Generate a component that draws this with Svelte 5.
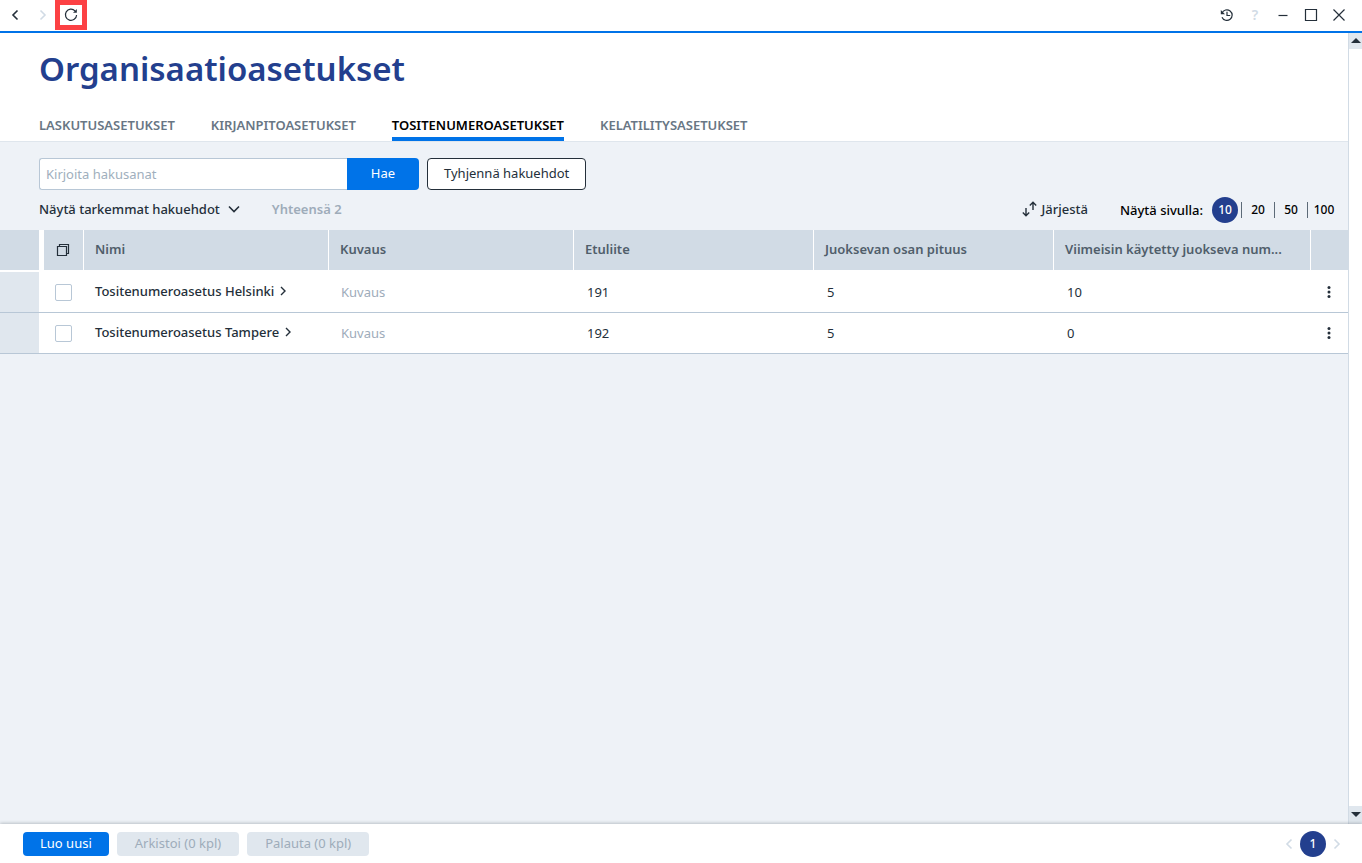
<script>
  let search = $state('');
  let activeTab = $state('TOSITENUMEROASETUKSET');
  let pageSize = $state(10);
  let selected = $state([]);

  const tabs = [
    'LASKUTUSASETUKSET',
    'KIRJANPITOASETUKSET',
    'TOSITENUMEROASETUKSET',
    'KELATILITYSASETUKSET'
  ];
  const pageSizes = [10, 20, 50, 100];
  const rows = [
    { name: 'Tositenumeroasetus Helsinki', prefix: '191', length: '5', last: '10' },
    { name: 'Tositenumeroasetus Tampere', prefix: '192', length: '5', last: '0' }
  ];
</script>

<div class="window">
  <header class="topbar">
    <button class="icon-button back" aria-label="Takaisin">
      <svg width="8" height="12" viewBox="0 0 8 12"><path d="M6.5 1.5 2 6l4.500 4.500" /></svg>
    </button>
    <button class="icon-button forward" aria-label="Eteenpäin" disabled>
      <svg width="8" height="12" viewBox="0 0 8 12"><path d="M1.500 1.500 6 6l-4.500 4.500" /></svg>
    </button>
    <button class="icon-button refresh" aria-label="Päivitä">
      <svg width="14" height="14" viewBox="0 0 14 14">
        <path class="thin" d="M11 2.800A5.600 5.600 0 1 0 12.600 7" />
        <path class="solid" d="M12.800 1v3.800H9z" />
      </svg>
    </button>
    <div class="window-controls">
      <button class="icon-button" aria-label="Historia">
        <svg width="14" height="14" viewBox="0 0 14 14">
          <path class="thin" d="M2 5A5.300 5.300 0 1 1 2 9.200M7 3.800V7.500h3.200" />
          <path class="solid" d="M.8 2v4.200H5z" />
        </svg>
      </button>
      <button class="icon-button help" aria-label="Ohje" disabled>?</button>
      <button class="icon-button" aria-label="Pienennä">
        <svg width="14" height="14" viewBox="0 0 14 14"><path class="thin" d="M2.500 7.500h9" /></svg>
      </button>
      <button class="icon-button" aria-label="Suurenna">
        <svg width="14" height="14" viewBox="0 0 14 14"><path class="thin" d="M1.500 1.500h11v11h-11z" /></svg>
      </button>
      <button class="icon-button" aria-label="Sulje">
        <svg width="14" height="14" viewBox="0 0 14 14"><path class="thin" d="m1.500 1.500 11 11m0-11-11 11" /></svg>
      </button>
    </div>
  </header>

  <div class="body">
    <main>
      <div class="heading">
        <h1>Organisaatioasetukset</h1>
        <nav class="tabs">
          {#each tabs as tab}
            <button class="tab" class:active={tab === activeTab} onclick={() => (activeTab = tab)}>{tab}</button>
          {/each}
        </nav>
      </div>

      <form class="search" onsubmit={(e) => e.preventDefault()}>
        <input type="text" aria-label="Hakusanat" placeholder="Kirjoita hakusanat" bind:value={search} />
        <button class="submit">Hae</button>
        <button class="clear" type="button" onclick={() => (search = '')}>Tyhjennä hakuehdot</button>
      </form>

      <div class="list-tools">
        <button class="more">
          Näytä tarkemmat hakuehdot
          <svg width="12" height="8" viewBox="0 0 12 8"><path d="m1 1.500 5 5 5-5" /></svg>
        </button>
        <span class="total">Yhteensä 2</span>
        <button class="sort">
          <svg width="15" height="16" viewBox="0 0 15 16">
            <path d="M4 7v8M.8 11.500 4 14.700l3.200-3.200M11 9V1M7.800 4.500 11 1.300l3.200 3.200" />
          </svg>
          Järjestä
        </button>
        <span class="size-label">Näytä sivulla:</span>
        <div class="sizes">
          {#each pageSizes as size}
            <button class:current={size === pageSize} onclick={() => (pageSize = size)}><span>{size}</span></button>
          {/each}
        </div>
      </div>

      <table>
        <colgroup>
          <col class="col-strip" />
          <col class="col-select" />
          <col class="col-wide" />
          <col class="col-wide" />
          <col class="col-medium" />
          <col class="col-medium" />
          <col />
          <col class="col-menu" />
        </colgroup>
        <thead>
          <tr>
            <th class="strip"></th>
            <th class="select">
              <button class="icon-button" aria-label="Valitse kaikki">
                <svg width="14" height="14" viewBox="0 0 14 14">
                  <path class="thin" d="M1.500 3.500h9v9h-9zM3.500 3.500v-2h9v9h-2" />
                </svg>
              </button>
            </th>
            <th>Nimi</th>
            <th>Kuvaus</th>
            <th>Etuliite</th>
            <th>Juoksevan osan pituus</th>
            <th>Viimeisin käytetty juokseva num...</th>
            <th class="menu"></th>
          </tr>
        </thead>
        <tbody>
          {#each rows as row}
            <tr>
              <td class="strip"></td>
              <td class="select">
                <input type="checkbox" aria-label={row.name} value={row.name} bind:group={selected} />
              </td>
              <td class="name">
                <a href="#avaa">
                  {row.name}
                  <svg width="6" height="10" viewBox="0 0 6 10"><path d="m1 1 4 4-4 4" /></svg>
                </a>
              </td>
              <td class="muted">Kuvaus</td>
              <td>{row.prefix}</td>
              <td>{row.length}</td>
              <td>{row.last}</td>
              <td class="menu">
                <button class="icon-button" aria-label="Toiminnot">
                  <svg width="4" height="14" viewBox="0 0 4 14">
                    <circle cx="2" cy="2.500" r="1.500" />
                    <circle cx="2" cy="7" r="1.500" />
                    <circle cx="2" cy="11.500" r="1.500" />
                  </svg>
                </button>
              </td>
            </tr>
          {/each}
        </tbody>
      </table>
    </main>

    <div class="scrollbar">
      <button aria-label="Vieritä ylös">
        <svg width="10" height="5" viewBox="0 0 10 5"><path class="solid" d="M0 5 5 0l5 5z" /></svg>
      </button>
      <button aria-label="Vieritä alas">
        <svg width="10" height="5" viewBox="0 0 10 5"><path class="solid" d="m0 0 5 5 5-5z" /></svg>
      </button>
    </div>
  </div>

  <footer>
    <button class="action primary">Luo uusi</button>
    <button class="action" disabled>Arkistoi (0 kpl)</button>
    <button class="action" disabled>Palauta (0 kpl)</button>
    <nav class="pager">
      <button class="icon-button" aria-label="Edellinen sivu" disabled>
        <svg width="8" height="12" viewBox="0 0 8 12"><path d="M6.500 1.500 2 6l4.500 4.500" /></svg>
      </button>
      <button class="page">1</button>
      <button class="icon-button" aria-label="Seuraava sivu" disabled>
        <svg width="8" height="12" viewBox="0 0 8 12"><path d="M1.500 1.500 6 6l-4.500 4.500" /></svg>
      </button>
    </nav>
  </footer>
</div>

<style>
  :global(body) {
    margin: 0;
  }

  .window {
    display: flex;
    flex-direction: column;
    min-height: 100vh;
    background: #eef2f7;
    color: #242f3a;
    font-family: 'Segoe UI', 'Noto Sans', sans-serif;
    font-size: 13px;
    line-height: 20px;
  }

  .window * {
    box-sizing: border-box;
  }

  button,
  input {
    margin: 0;
    padding: 0;
    border: 0;
    background: none;
    color: inherit;
    font: inherit;
  }

  button {
    cursor: pointer;
    white-space: nowrap;
  }

  svg {
    display: block;
    flex: none;
    fill: none;
    stroke: currentColor;
    stroke-width: 1.6;
  }

  .thin {
    stroke-width: 1.2;
  }

  .solid,
  circle {
    fill: currentColor;
    stroke: none;
  }

  .icon-button {
    display: flex;
    align-items: center;
    justify-content: center;
    width: 28px;
    height: 30px;
  }

  .icon-button:disabled {
    color: #d1dbe5;
    cursor: default;
  }

  .topbar {
    display: flex;
    height: 33px;
    padding: 0 9px 0 1px;
    background: #fff;
    border-bottom: 2px solid #0073e8;
  }

  .topbar .refresh {
    width: 32px;
    margin-left: -2px;
    border: 5px solid #fc4144;
  }

  .window-controls {
    display: flex;
    margin-left: auto;
  }

  .help {
    font-size: 14px;
    font-weight: 600;
  }

  .body {
    display: flex;
    flex: 1;
  }

  main {
    flex: 1;
    min-width: 0;
  }

  .heading {
    padding: 12px 39px 0;
    background: #fff;
    border-bottom: 1px solid #dfe6ed;
  }

  h1 {
    margin: 0;
    color: #233f8e;
    font-size: 33px;
    font-weight: 600;
    line-height: 48px;
  }

  .tabs {
    display: flex;
    gap: 36px;
    margin-top: 20px;
  }

  .tab {
    height: 28px;
    border-bottom: 4px solid transparent;
    color: #687684;
    font-weight: 600;
  }

  .tab.active {
    border-color: #0073e8;
    color: #000;
  }

  .search {
    display: flex;
    padding: 16px 39px 0;
  }

  .search input {
    width: 308px;
    height: 32px;
    padding: 0 6px;
    background: #fff;
    border: 1px solid #b8c7d6;
    border-right: 0;
    border-radius: 3px 0 0 3px;
  }

  .search input::placeholder {
    color: #a0afbd;
    opacity: 1;
  }

  .submit {
    width: 72px;
    background: #0073e8;
    border-radius: 0 4px 4px 0;
    color: #fff;
  }

  .clear {
    margin-left: 8px;
    padding: 0 16px;
    background: #fff;
    border: 1px solid #242f3a;
    border-radius: 4px;
  }

  .submit,
  .clear {
    padding-bottom: 2px;
  }

  .list-tools {
    display: flex;
    align-items: center;
    height: 40px;
    padding: 0 8px 0 39px;
    font-weight: 500;
  }

  .more,
  .total,
  .sort {
    padding-bottom: 2px;
  }

  .more,
  .sort {
    display: flex;
    align-items: center;
    gap: 8px;
  }

  .total {
    margin-left: 32px;
    color: #9eacba;
    font-weight: 600;
  }

  .sort {
    gap: 5px;
    margin-left: auto;
  }

  .sort svg {
    stroke-width: 1.4;
  }

  .size-label {
    margin: 0 6px 0 32px;
    color: #000;
  }

  .sizes {
    display: flex;
    color: #000;
    font-size: 12px;
  }

  .sizes button {
    display: flex;
    align-items: center;
    justify-content: center;
    width: 33px;
    height: 16px;
    border-right: 1px solid #5d6b78;
  }

  .sizes button:last-child {
    width: 32px;
    border-right: 0;
  }

  .sizes .current span {
    width: 26px;
    background: #233f8e;
    border-radius: 50%;
    color: #fff;
    line-height: 26px;
  }

  table {
    width: 100%;
    border-spacing: 0;
    table-layout: fixed;
  }

  .col-strip {
    width: 39px;
  }

  .col-select {
    width: 45px;
  }

  .col-wide {
    width: 245px;
  }

  .col-medium {
    width: 240px;
  }

  .col-menu {
    width: 37px;
  }

  th {
    height: 42px;
    padding: 0 11px 2px;
    overflow: hidden;
    background: #d1dbe5;
    border-right: 1px solid #fff;
    border-bottom: 2px solid #fff;
    color: #505e6b;
    font-weight: 600;
    text-align: left;
    text-overflow: ellipsis;
    white-space: nowrap;
  }

  th.strip,
  th.menu {
    border-right: 0;
  }

  th.select {
    padding: 0 5px;
    border-left: 5px solid #fff;
    color: #242f3a;
  }

  td {
    height: 41px;
    padding: 0 13px;
    background: #fff;
    border-bottom: 1px solid #b8c7d6;
  }

  td.strip {
    background: #e0e7ee;
  }

  td.select {
    padding: 0 0 0 16px;
  }

  td.select input {
    display: block;
    width: 17px;
    height: 17px;
    appearance: none;
    background: #fff;
    border: 1px solid #b8c7d6;
    border-radius: 2px;
  }

  td.select input:checked {
    background: #0073e8;
  }

  td.name {
    padding: 0 11px 2px;
    font-weight: 500;
  }

  .name a {
    display: flex;
    align-items: center;
    gap: 6px;
    color: inherit;
    text-decoration: none;
  }

  .name svg {
    stroke-width: 1.4;
  }

  td.muted {
    padding: 0 12px;
    color: #9eacba;
  }

  td.menu {
    padding: 0 4px;
  }

  .scrollbar {
    display: flex;
    flex-direction: column;
    justify-content: space-between;
    width: 14px;
    background: #fff;
    border-left: 1px solid #d1dbe5;
  }

  .scrollbar button {
    display: flex;
    align-items: center;
    justify-content: center;
    height: 16px;
    padding-bottom: 2px;
    background: #e0e7ee;
  }

  .scrollbar button:last-child {
    height: 18px;
  }

  footer {
    display: flex;
    align-items: center;
    gap: 8px;
    height: 39px;
    padding: 0 14px 0 23px;
    background: #fff;
    box-shadow: 0 -1px 3px rgba(36, 47, 58, 0.25);
  }

  .action {
    height: 24px;
    padding: 0 18px 2px;
    border-radius: 4px;
  }

  .action:disabled {
    background: #e0e7ee;
    color: #9eacba;
    cursor: default;
  }

  .action.primary {
    padding: 0 17px 2px;
    background: #0073e8;
    color: #fff;
  }

  .pager {
    display: flex;
    align-items: center;
    margin-left: auto;
  }

  .pager .icon-button {
    width: 22px;
  }

  .page {
    width: 26px;
    height: 26px;
    background: #233f8e;
    border-radius: 50%;
    color: #fff;
    font-size: 12px;
    font-weight: 500;
  }
</style>
